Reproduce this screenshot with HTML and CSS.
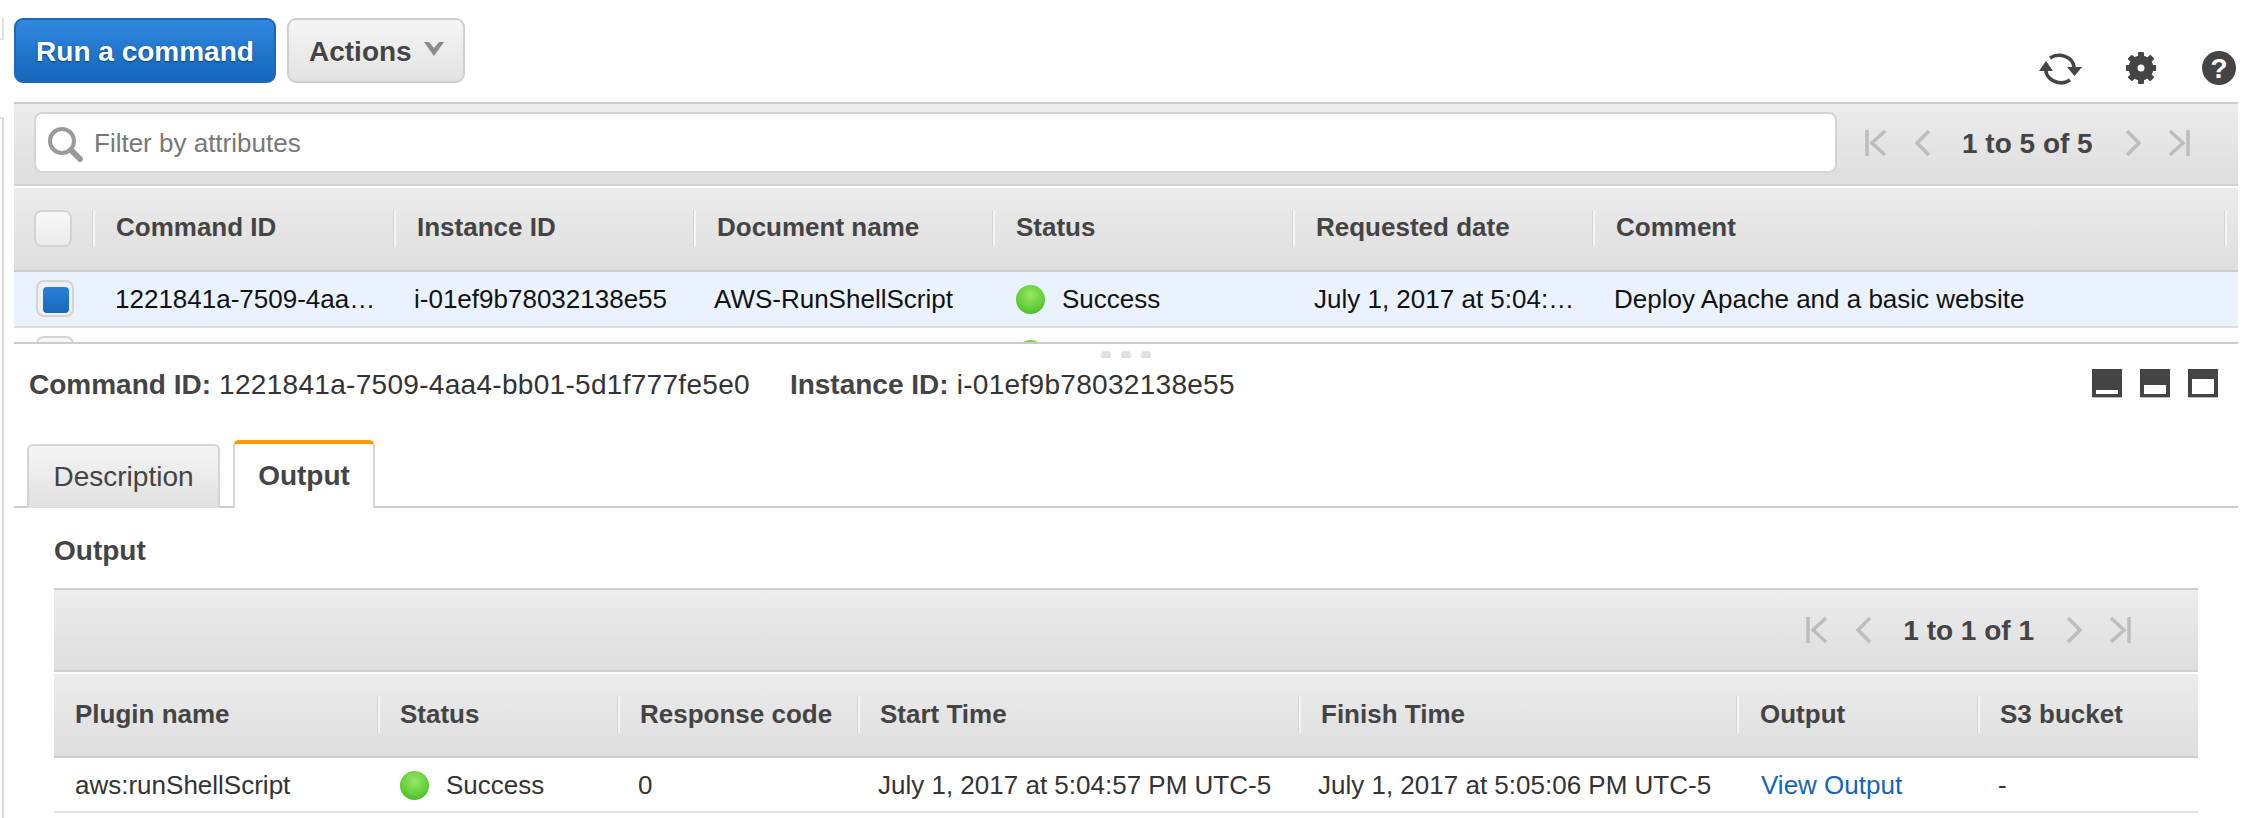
FILE: index.html
```html
<!DOCTYPE html>
<html lang="en">
<head>
<meta charset="utf-8">
<title>Run Command</title>
<link rel="stylesheet" href="styles.css">
</head>
<body>
<div class="shell">
  <aside class="rail"><div class="rail-top"></div><div class="rail-main"></div></aside>
  <main class="main">
    <div class="actions">
      <button class="btn btn-primary">Run a command</button>
      <button class="btn btn-default">Actions
        <svg class="caret" viewBox="0 0 20 14"><path d="M0 0h5l5 6 5-6h5L10 14z"/></svg>
      </button>
      <div class="tools">
        <svg class="tool-refresh" viewBox="0 0 44 34"><path class="arc" d="M11 6A15 13 0 0 1 35 15"/><path class="arc" d="M31 28A15 13 0 0 1 7 16"/><path class="tip" d="M28 15h15l-7.500 9zM0 19h14L7 9z"/></svg>
        <svg class="tool-gear" viewBox="0 0 30 32"><g class="teeth"><rect x="12" y="0" width="6" height="32" rx="1"/><rect x="12" y="0" width="6" height="32" rx="1" transform="rotate(45 15 16)"/><rect x="12" y="0" width="6" height="32" rx="1" transform="rotate(90 15 16)"/><rect x="12" y="0" width="6" height="32" rx="1" transform="rotate(135 15 16)"/></g><circle class="ring" cx="15" cy="16" r="8"/></svg>
        <div class="tool-help">?</div>
      </div>
    </div>

    <div class="toolbar">
      <div class="search">
        <svg class="search-icon" viewBox="0 0 36 36"><circle cx="15" cy="15" r="12"/><path d="M24 24l9 9"/></svg>
        <span class="search-text">Filter by attributes</span>
      </div>
      <div class="pager pager-top">
        <svg class="pg pg-first" viewBox="0 0 22 28"><path d="M2 1v26M20 2L7 14l13 12"/></svg>
        <svg class="pg pg-prev" viewBox="0 0 15 28"><path d="M14 2L2 14l12 12"/></svg>
        <span class="pg-text">1 to 5 of 5</span>
        <svg class="pg pg-next" viewBox="0 0 15 28"><path d="M1 2l12 12L1 26"/></svg>
        <svg class="pg pg-last" viewBox="0 0 22 28"><path d="M20 1v26M2 2l13 12L2 26"/></svg>
      </div>
    </div>

    <div class="grid-commands head">
      <div class="cell-check"><span class="check"></span></div>
      <div class="th">Command ID</div>
      <div class="th">Instance ID</div>
      <div class="th">Document name</div>
      <div class="th">Status</div>
      <div class="th">Requested date</div>
      <div class="th">Comment</div>
      <div class="th th-end"></div>
    </div>
    <div class="grid-commands row-selected">
      <div class="cell-check"><span class="check check-on"><i></i></span></div>
      <div class="td">1221841a-7509-4aa4-bb01-5d1f777fe5e0</div>
      <div class="td">i-01ef9b78032138e55</div>
      <div class="td">AWS-RunShellScript</div>
      <div class="td status"><span class="dot"></span>Success</div>
      <div class="td">July 1, 2017 at 5:04:57 PM UTC-5</div>
      <div class="td">Deploy Apache and a basic website</div>
      <div></div>
    </div>
    <div class="grid-commands row-peek">
      <div class="cell-check"><span class="check"></span></div>
      <div></div><div></div><div></div>
      <div class="td status"><span class="dot"></span></div>
      <div></div><div></div><div></div>
    </div>

    <section class="detail">
      <div class="grip"><i></i><i></i><i></i></div>
      <div class="summary">
        <div class="summary-text">
          <span><b>Command ID:</b> 1221841a-7509-4aa4-bb01-5d1f777fe5e0</span>
          <span><b>Instance ID:</b> i-01ef9b78032138e55</span>
        </div>
        <div class="panes">
          <div class="pane pane-a"><i></i></div>
          <div class="pane pane-b"><i></i></div>
          <div class="pane pane-c"><i></i></div>
        </div>
      </div>
      <div class="tabs">
        <div class="tab">Description</div>
        <div class="tab tab-active">Output</div>
      </div>
      <div class="output">
        <h2 class="output-title">Output</h2>
        <div class="toolbar toolbar-inner">
          <div class="pager pager-inner">
            <svg class="pg pg-first" viewBox="0 0 22 28"><path d="M2 1v26M20 2L7 14l13 12"/></svg>
            <svg class="pg pg-prev" viewBox="0 0 15 28"><path d="M14 2L2 14l12 12"/></svg>
            <span class="pg-text">1 to 1 of 1</span>
            <svg class="pg pg-next" viewBox="0 0 15 28"><path d="M1 2l12 12L1 26"/></svg>
            <svg class="pg pg-last" viewBox="0 0 22 28"><path d="M20 1v26M2 2l13 12L2 26"/></svg>
          </div>
        </div>
        <div class="grid-plugins head">
          <div class="th">Plugin name</div>
          <div class="th">Status</div>
          <div class="th">Response code</div>
          <div class="th">Start Time</div>
          <div class="th">Finish Time</div>
          <div class="th">Output</div>
          <div class="th">S3 bucket</div>
        </div>
        <div class="grid-plugins row-plain">
          <div class="td">aws:runShellScript</div>
          <div class="td status"><span class="dot"></span>Success</div>
          <div class="td">0</div>
          <div class="td">July 1, 2017 at 5:04:57 PM UTC-5</div>
          <div class="td">July 1, 2017 at 5:05:06 PM UTC-5</div>
          <div class="td"><a class="link" href="#">View Output</a></div>
          <div class="td">-</div>
        </div>
      </div>
    </section>
  </main>
</div>
</body>
</html>
```

FILE: styles.css
```css
* { box-sizing: border-box; }
html, body { margin: 0; padding: 0; background: #fff; }
body { font-family: "Liberation Sans", Arial, sans-serif; color: #111; font-size: 26px; }

.shell { display: flex; height: 818px; overflow: hidden; }

.rail { width: 4px; flex: none; padding-top: 18px; }
.rail-top { height: 22px; border-right: 2px solid #e2e2e2; border-bottom: 2px solid #e2e2e2; }
.rail-main { margin-top: 77px; height: 720px; border-right: 2px solid #d8d8d8; border-top: 2px solid #e2e2e2; }

.main { flex: 1; min-width: 0; margin-left: 10px; margin-right: 10px; }

/* Action bar */
.actions { height: 102px; padding-top: 18px; display: flex; align-items: flex-start; gap: 11px; }
.btn { height: 65px; border-radius: 9px; font: bold 28px "Liberation Sans", Arial, sans-serif; padding: 2px 0 0; display: flex; align-items: center; }
.btn-primary { width: 262px; justify-content: center; color: #fff; border: 2px solid #1a69bd; background: linear-gradient(#3088dc, #1467bc); text-shadow: 0 1px 2px rgba(0, 50, 110, .8); }
.btn-default { width: 178px; padding-left: 20px; color: #444; border: 2px solid #cfcfcf; background: linear-gradient(#f6f6f6, #e2e2e2); text-shadow: 0 1px 0 #fff; }
.caret { width: 20px; height: 14px; margin-left: 12px; margin-top: -6px; fill: #8b8b8b; }

.tools { margin-left: auto; padding-top: 32px; padding-right: 2px; display: flex; align-items: center; }
.tool-refresh { width: 44px; height: 34px; margin-top: 2px; }
.tool-refresh .arc { fill: none; stroke: #444; stroke-width: 3.600; }
.tool-refresh .tip { fill: #444; }
.tool-gear { width: 30px; height: 32px; margin-left: 43px; }
.tool-gear .teeth { fill: #444; }
.tool-gear .ring { fill: #fff; stroke: #444; stroke-width: 9; }
.tool-help { width: 34px; height: 34px; margin-left: 46px; border-radius: 50%; background: #444; color: #fff; font: bold 28px/35px "Liberation Sans", Arial, sans-serif; text-align: center; }

/* Toolbars */
.toolbar { height: 84px; display: flex; align-items: flex-start; padding: 8px 47px 0 20px; border-top: 2px solid #ccc; border-bottom: 2px solid #d0d0d0; background: linear-gradient(#ececec, #dedede); }
.toolbar-inner { justify-content: flex-end; padding-right: 67px; }
.search { width: 1803px; height: 61px; flex: none; display: flex; align-items: center; padding-left: 11px; background: #fff; border: 2px solid #d4d4d4; border-radius: 8px; color: #777; font-size: 26px; }
.search-icon { width: 36px; height: 36px; margin-right: 11px; margin-top: 2px; fill: none; stroke: #9a9a9a; stroke-width: 4; flex: none; }
.search-icon path { stroke-width: 6; stroke-linecap: round; }
.search-text { padding-top: 2px; }

.pager { display: flex; align-items: center; height: 28px; }
.pager-top { margin-left: 28px; margin-top: 17px; }
.pager-inner { margin-top: 18px; }
.pg { height: 28px; fill: none; stroke: #bdbdbd; stroke-width: 3.500; flex: none; }
.pg-first, .pg-last { width: 22px; }
.pg-prev, .pg-next { width: 15px; }
.pg-first { margin-right: 28px; }
.pg-next { margin-right: 27px; }
.pg-text { font-weight: bold; font-size: 28px; color: #444; margin: 0 33px 0 32px; padding-top: 2px; white-space: nowrap; }

/* Tables */
.grid-commands { display: grid; grid-template-columns: 79px 301px 300px 299px 300px 300px 632px 13px; }
.grid-plugins { display: grid; grid-template-columns: 324px 240px 240px 441px 438px 241px 220px; }

.head { height: 84px; margin-top: 2px; align-items: start; border-bottom: 2px solid #ccc; background: linear-gradient(#ececec, #dedede); padding-top: 22px; }
.th { height: 37px; line-height: 37px; font-size: 26px; font-weight: bold; color: #444; border-left: 2px solid #f5f5f5; box-shadow: -1px 0 0 #d4d4d4; padding-left: 20px; white-space: nowrap; }
.grid-commands .th { line-height: 35px; padding-left: 21px; }
.grid-plugins .th:first-child { border-left: 0; box-shadow: none; padding-left: 21px; }
.grid-plugins .th:nth-child(6) { padding-left: 21px; }
.th-end { padding: 0; }

.cell-check { padding-left: 20px; }
.check { display: block; width: 38px; height: 37px; border: 2px solid #d4d4d4; border-radius: 8px; background: linear-gradient(#f8f8f8, #ebebeb); }
.check-on { width: 38px; padding: 5px 5px; background: #f0f0f0; margin: 8px 0 0 2px; }
.check-on i { display: block; width: 26px; height: 26px; border-radius: 4px; background: linear-gradient(#2b80d6, #1768bd); }

.row-selected { height: 56px; background: #eaf2fd; border-bottom: 2px solid #ddd; align-items: start; }
.row-plain { height: 55px; border-bottom: 2px solid #e2e2e2; align-items: start; }
.td { line-height: 54px; height: 54px; padding: 0 10px 0 20px; white-space: nowrap; overflow: hidden; text-overflow: ellipsis; color: #111; }
.row-selected .td:nth-child(2) { padding-left: 22px; }
.row-selected .td:nth-child(6), .row-selected .td:nth-child(7) { padding-left: 21px; }
.row-plain .td { color: #333; padding-left: 20px; }
.row-plain .td:first-child { padding-left: 21px; }
.row-plain .td:nth-child(5) { padding-left: 19px; }
.status { display: flex; align-items: center; padding-left: 23px; }
.row-plain .td.status { padding-left: 22px; }
.dot { width: 29px; height: 29px; flex: none; margin-right: 17px; border-radius: 50%; background: radial-gradient(circle at 50% 35%, #9be665 0, #63cf3a 55%, #3ea81f 100%); }
.row-peek { height: 14px; overflow: hidden; align-items: start; }
.row-peek .cell-check { padding-top: 8px; padding-left: 22px; }
.row-peek .status { height: auto; line-height: normal; padding-top: 12px; overflow: visible; }

.link { color: #1166bb; text-decoration: none; margin-left: 4px; }

/* Detail pane */
.detail { border-top: 2px solid #ccc; }
.grip { height: 14px; padding-top: 7px; display: flex; justify-content: center; gap: 10px; }
.grip i { width: 10px; height: 7px; border-radius: 4px 4px 1px 1px; background: #e0e0e0; }

.summary { height: 50px; padding: 0 20px 0 15px; display: flex; align-items: center; justify-content: space-between; }
.summary-text { display: flex; gap: 40px; font-size: 28px; color: #333; letter-spacing: 0.3px; padding-top: 4px; }
.summary-text b { color: #444; letter-spacing: 0; }
.panes { display: flex; gap: 18px; }
.pane { width: 30px; height: 29px; background: #444; padding: 0 4px 3px; display: flex; align-items: flex-end; border-bottom: 1px solid #bbb; }
.pane i { display: block; width: 100%; background: #fff; }
.pane-a i { height: 4px; }
.pane-b i { height: 9px; }
.pane-c i { height: 15px; }

.tabs { margin-top: 32px; height: 68px; padding-left: 13px; display: flex; align-items: flex-end; gap: 13px; border-bottom: 2px solid #ccc; }
.tab { width: 193px; height: 64px; margin-bottom: -2px; text-align: center; line-height: 62px; font-size: 28px; color: #444; border: 2px solid #d4d4d4; border-bottom: 0; border-radius: 6px 6px 0 0; background: linear-gradient(#f5f5f5, #e0e0e0); }
.tab-active { width: 142px; height: 68px; font-weight: bold; background: #fff; border-top: 4px solid #f90; line-height: 64px; }

.output { padding: 0 40px; }
.output-title { margin: 0; padding: 27px 0 21px; font-size: 28px; line-height: 32px; color: #444; }
```
